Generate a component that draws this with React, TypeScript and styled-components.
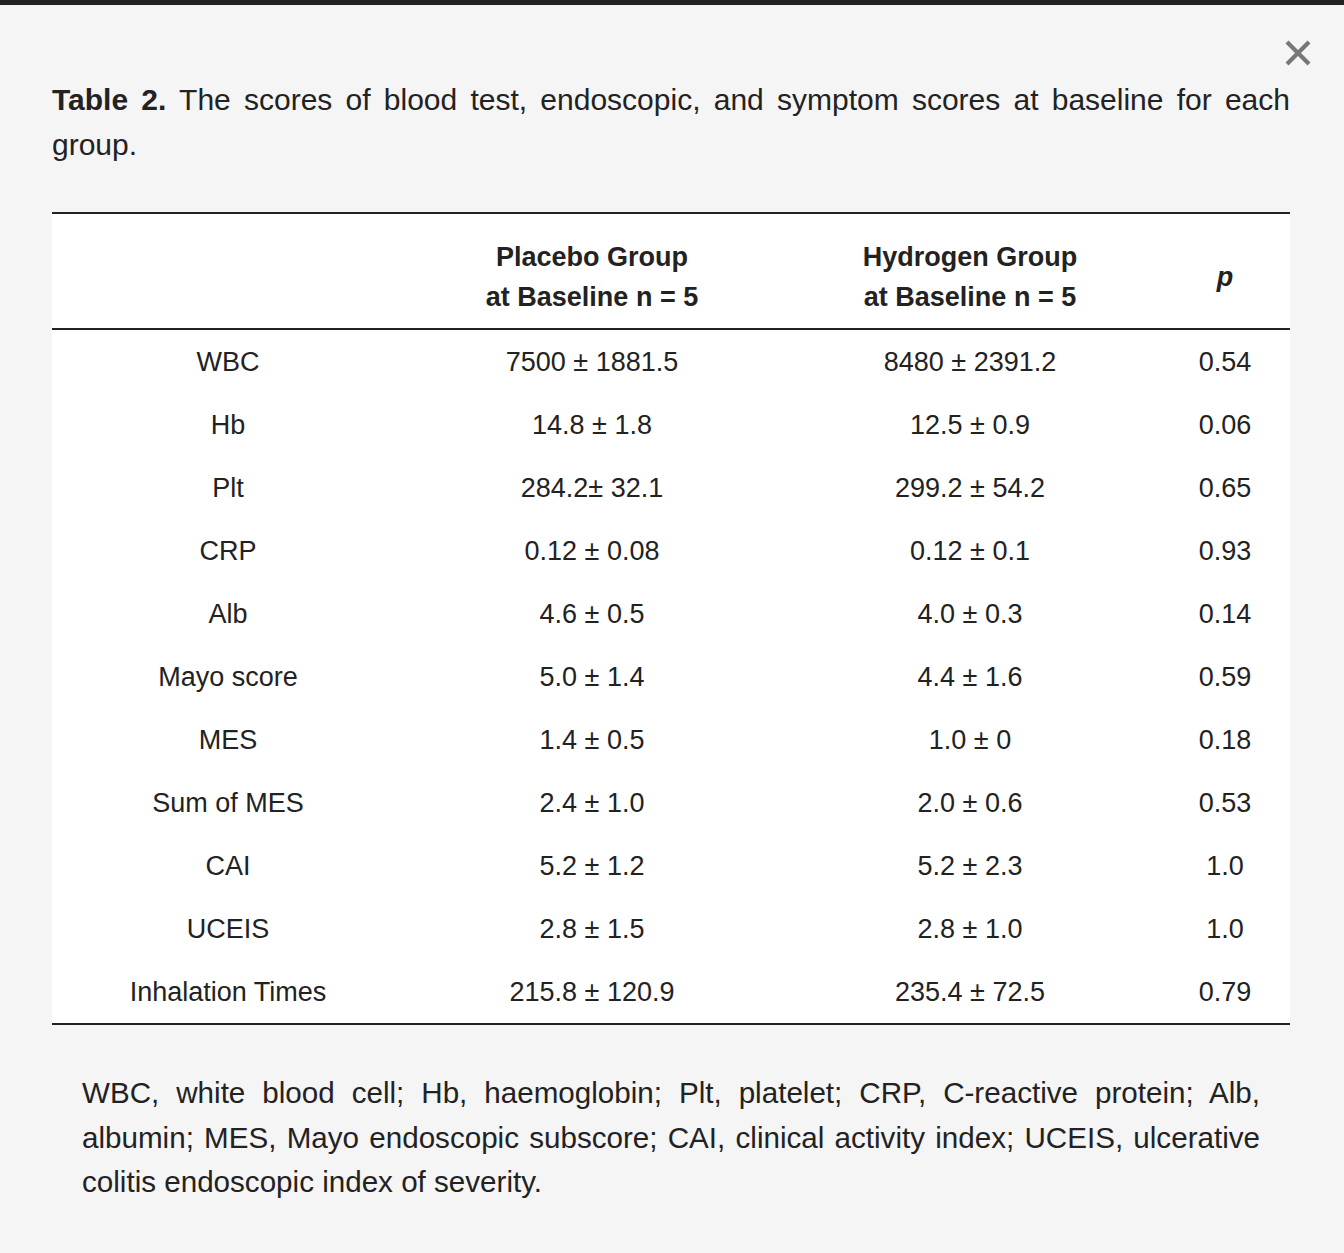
import React from "react";
import styled, { createGlobalStyle } from "styled-components";

const GlobalStyle = createGlobalStyle`
  html, body {
    margin: 0;
    padding: 0;
    background: #f5f5f5;
  }
  body {
    font-family: "Liberation Sans", Arial, sans-serif;
    color: #222;
  }
`;

const Page = styled.div`
  position: relative;
  min-height: 1253px;
  box-sizing: border-box;
  border-top: 5px solid #222;
  background: #f5f5f5;
  padding: 72px 54px 40px 52px;
`;

const CloseButton = styled.button`
  position: absolute;
  top: 31px;
  right: 29px;
  width: 34px;
  height: 34px;
  padding: 0;
  border: none;
  background: transparent;
  cursor: pointer;
  display: flex;
  align-items: center;
  justify-content: center;
`;

const Caption = styled.p`
  margin: 0 0 45px 0;
  font-size: 30px;
  line-height: 45px;
  text-align: justify;
  color: #222;
`;

const CaptionLabel = styled.b`
  font-weight: 700;
`;

const Table = styled.table`
  width: 100%;
  border-collapse: collapse;
  background: #fff;
  table-layout: fixed;
  border-top: 2px solid #222;
  border-bottom: 2px solid #222;
  font-size: 27px;
  color: #222;
`;

const HeadRow = styled.tr`
  border-bottom: 2px solid #222;
`;

const HeadCell = styled.th<{ $italic?: boolean }>`
  font-weight: 700;
  font-size: 27px;
  line-height: 40px;
  padding: 23px 4px 11px 4px;
  text-align: center;
  vertical-align: middle;
  font-style: ${(p) => (p.$italic ? "italic" : "normal")};
`;

const Cell = styled.td`
  height: 63px;
  padding: 0 4px;
  text-align: center;
  vertical-align: middle;
  line-height: 30px;
`;

const Footnote = styled.p`
  margin: 46px 30px 0 30px;
  font-size: 29.6px;
  line-height: 44.5px;
  text-align: justify;
  color: #222;
`;

const rows: [string, string, string, string][] = [
  ["WBC", "7500 ± 1881.5", "8480 ± 2391.2", "0.54"],
  ["Hb", "14.8 ± 1.8", "12.5 ± 0.9", "0.06"],
  ["Plt", "284.2± 32.1", "299.2 ± 54.2", "0.65"],
  ["CRP", "0.12 ± 0.08", "0.12 ± 0.1", "0.93"],
  ["Alb", "4.6 ± 0.5", "4.0 ± 0.3", "0.14"],
  ["Mayo score", "5.0 ± 1.4", "4.4 ± 1.6", "0.59"],
  ["MES", "1.4 ± 0.5", "1.0 ± 0", "0.18"],
  ["Sum of MES", "2.4 ± 1.0", "2.0 ± 0.6", "0.53"],
  ["CAI", "5.2 ± 1.2", "5.2 ± 2.3", "1.0"],
  ["UCEIS", "2.8 ± 1.5", "2.8 ± 1.0", "1.0"],
  ["Inhalation Times", "215.8 ± 120.9", "235.4 ± 72.5", "0.79"],
];

export default function App() {
  return (
    <>
      <GlobalStyle />
      <Page>
        <CloseButton aria-label="Close">
          <svg width="28" height="28" viewBox="0 0 28 28">
            <path
              d="M3 3 L25 25 M25 3 L3 25"
              stroke="#777"
              strokeWidth="4.2"
              strokeLinecap="butt"
            />
          </svg>
        </CloseButton>
        <Caption>
          <CaptionLabel>Table 2.</CaptionLabel> The scores of blood test,
          endoscopic, and symptom scores at baseline for each group.
        </Caption>
        <Table>
          <colgroup>
            <col style={{ width: "352px" }} />
            <col style={{ width: "376px" }} />
            <col style={{ width: "380px" }} />
            <col style={{ width: "130px" }} />
          </colgroup>
          <thead>
            <HeadRow>
              <HeadCell></HeadCell>
              <HeadCell>
                Placebo Group
                <br />
                at Baseline n = 5
              </HeadCell>
              <HeadCell>
                Hydrogen Group
                <br />
                at Baseline n = 5
              </HeadCell>
              <HeadCell $italic>p</HeadCell>
            </HeadRow>
          </thead>
          <tbody>
            {rows.map((r) => (
              <tr key={r[0]}>
                {r.map((c, i) => (
                  <Cell key={i}>{c}</Cell>
                ))}
              </tr>
            ))}
          </tbody>
        </Table>
        <Footnote>
          WBC, white blood cell; Hb, haemoglobin; Plt, platelet; CRP, C-reactive
          protein; Alb, albumin; MES, Mayo endoscopic subscore; CAI, clinical
          activity index; UCEIS, ulcerative colitis endoscopic index of severity.
        </Footnote>
      </Page>
    </>
  );
}
